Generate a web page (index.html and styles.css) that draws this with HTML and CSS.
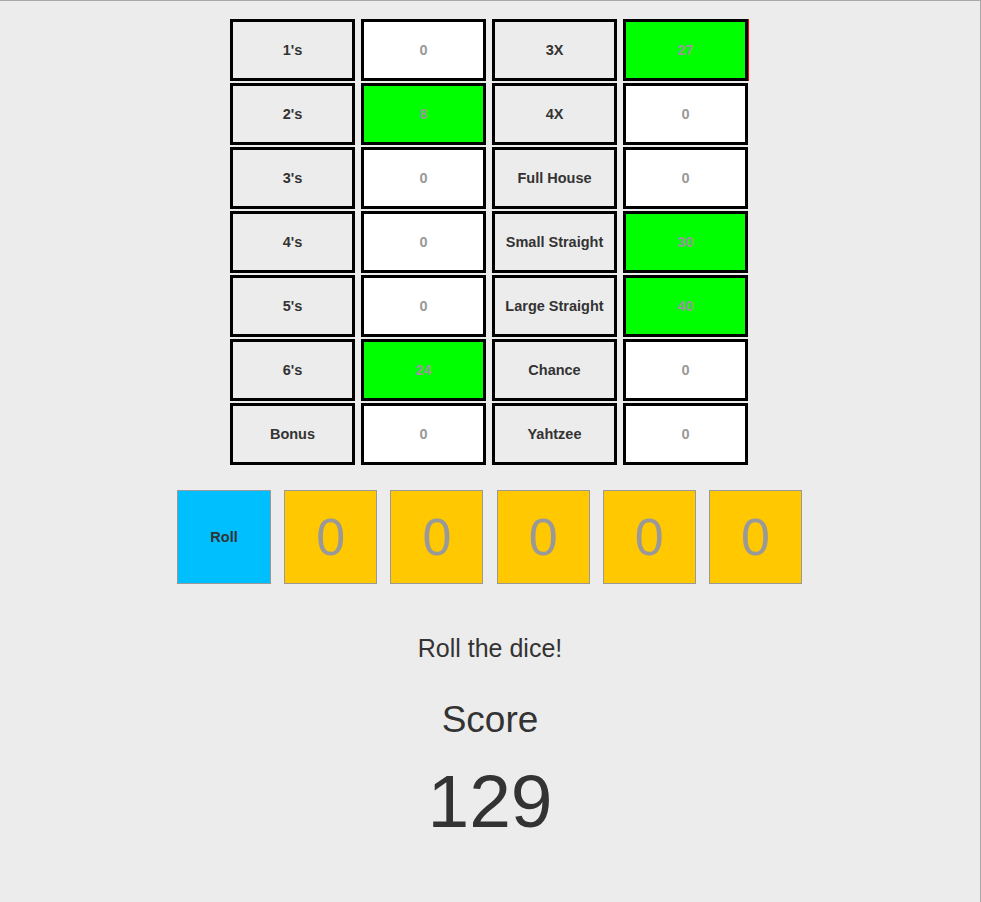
FILE: index.html
```html
<!DOCTYPE html>
<html>
<head>
<meta charset="utf-8">
<title>Yahtzee</title>
<link rel="stylesheet" href="styles.css">
</head>
<body>
<div class="frame">
  <div class="board">
    <div class="cell label">1's</div>
    <div class="cell value">0</div>
    <div class="cell label">3X</div>
    <div class="cell value used focus">27</div>

    <div class="cell label">2's</div>
    <div class="cell value used">8</div>
    <div class="cell label">4X</div>
    <div class="cell value">0</div>

    <div class="cell label">3's</div>
    <div class="cell value">0</div>
    <div class="cell label">Full House</div>
    <div class="cell value">0</div>

    <div class="cell label">4's</div>
    <div class="cell value">0</div>
    <div class="cell label">Small Straight</div>
    <div class="cell value used">30</div>

    <div class="cell label">5's</div>
    <div class="cell value">0</div>
    <div class="cell label">Large Straight</div>
    <div class="cell value used">40</div>

    <div class="cell label">6's</div>
    <div class="cell value used">24</div>
    <div class="cell label">Chance</div>
    <div class="cell value">0</div>

    <div class="cell label">Bonus</div>
    <div class="cell value">0</div>
    <div class="cell label">Yahtzee</div>
    <div class="cell value">0</div>
  </div>

  <div class="dice-row">
    <div class="roll">Roll</div>
    <div class="die">0</div>
    <div class="die">0</div>
    <div class="die">0</div>
    <div class="die">0</div>
    <div class="die">0</div>
  </div>

  <div class="message">Roll the dice!</div>
  <div class="score-title">Score</div>
  <div class="score">129</div>
</div>
</body>
</html>
```

FILE: styles.css
```css
html {
  background: #ececec;
}
body {
  margin: 0;
  font-family: "Liberation Sans", Arial, sans-serif;
  color: #333;
}
.frame {
  box-sizing: border-box;
  height: 902px;
  border-top: 1px solid #a8a8a8;
  border-right: 1px solid #a8a8a8;
  display: flex;
  flex-direction: column;
  align-items: center;
}
.board {
  margin-top: 18px;
  margin-right: 2px;
  display: grid;
  grid-template-columns: repeat(4, 125px);
  grid-auto-rows: 62px;
  column-gap: 6px;
  row-gap: 2px;
}
.cell {
  box-sizing: border-box;
  border: 3px solid #000;
  display: flex;
  align-items: center;
  justify-content: center;
  font-size: 14.5px;
  font-weight: bold;
}
.label {
  background: #ececec;
  color: #333;
}
.value {
  background: #fff;
  color: #999;
}
.value.used {
  background: #00ff00;
}
.focus {
  box-shadow: 1px 0 0 #ff0000;
}
.dice-row {
  margin-top: 25px;
  margin-right: 1px;
  display: flex;
  gap: 13.2px;
}
.roll,
.die {
  box-sizing: border-box;
  height: 94px;
  border: 1px solid #999;
  display: flex;
  align-items: center;
  justify-content: center;
}
.roll {
  width: 94px;
  background: #00bfff;
  font-size: 14.5px;
  font-weight: bold;
  color: #333;
}
.die {
  width: 93px;
  background: #ffc800;
  font-size: 52px;
  color: #999;
}
.message {
  margin-top: 50px;
  font-size: 25px;
  line-height: 28px;
}
.score-title {
  margin-top: 36px;
  font-size: 37px;
  line-height: 44px;
}
.score {
  margin-top: 15px;
  font-size: 75px;
  line-height: 88px;
}
```
